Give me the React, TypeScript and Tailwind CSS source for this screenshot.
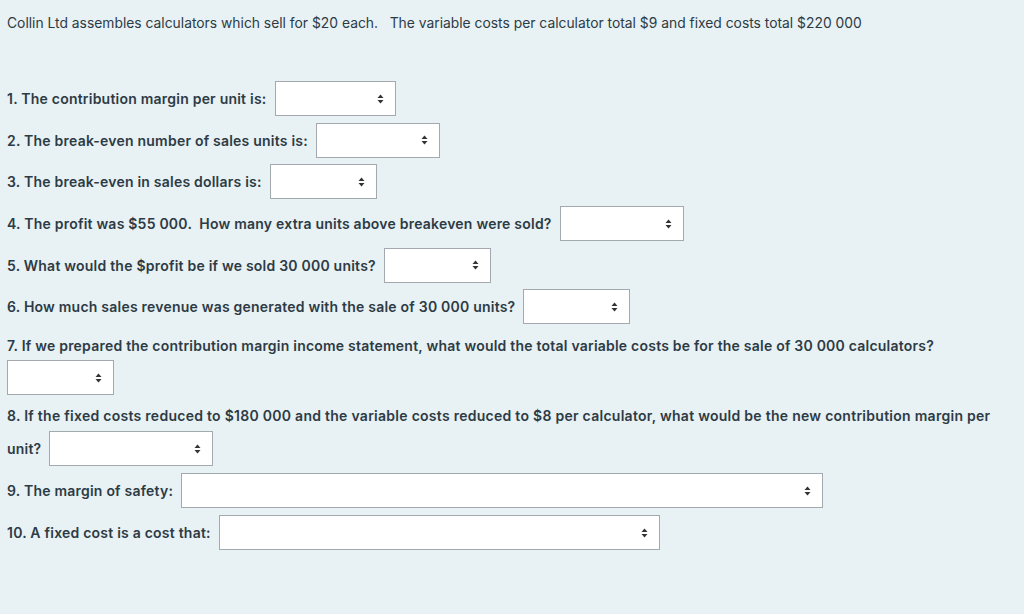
import React from "react";

function Sel({ w }: { w: number }) {
  return (
    <div
      className="relative h-[35px] shrink-0 border border-[#a3a9ae] bg-white"
      style={{ width: w }}
    >
      <svg
        className="absolute right-[11px] top-1/2 -translate-y-1/2"
        width="7"
        height="10"
        viewBox="0 0 7 10"
      >
        <path d="M3.5 0.5 L6.5 4 L0.5 4 Z" fill="#333" />
        <path d="M3.5 9.5 L6.5 6 L0.5 6 Z" fill="#333" />
      </svg>
    </div>
  );
}

function Row({ label, w }: { label: string; w: number }) {
  return (
    <div className="flex h-[35px] items-center gap-[8px]">
      <span className="whitespace-pre">{label}</span>
      <Sel w={w} />
    </div>
  );
}

export default function App() {
  return (
    <div className="min-h-[614px] bg-[#e8f1f4] px-[7px] pt-[14px] font-['Inter',sans-serif] text-[#2d3b45]">
      <p className="whitespace-pre text-[13.85px] leading-[18px]">
        {"Collin Ltd assembles calculators which sell for $20 each.   The variable costs per calculator total $9 and fixed costs total $220 000"}
      </p>
      <div className="text-[14px] font-semibold tracking-[0.22px]">
        <div className="mt-[49px] flex flex-col gap-[6.7px]">
          <Row label="1. The contribution margin per unit is:" w={121} />
          <Row label="2. The break-even number of sales units is:" w={124} />
          <Row label="3. The break-even in sales dollars is:" w={107} />
          <Row label="4. The profit was $55 000.  How many extra units above breakeven were sold?" w={124} />
          <Row label="5. What would the $profit be if we sold 30 000 units?" w={107} />
          <Row label="6. How much sales revenue was generated with the sale of 30 000 units?" w={107} />
        </div>
        <p className="mt-[12px] whitespace-nowrap leading-[20px]">
          7. If we prepared the contribution margin income statement, what would the total variable costs be for the sale of 30 000 calculators?
        </p>
        <div className="mt-[4px]">
          <Sel w={107} />
        </div>
        <p className="mt-[11px] whitespace-nowrap leading-[20px] tracking-[0.27px]">
          8. If the fixed costs reduced to $180 000 and the variable costs reduced to $8 per calculator, what would be the new contribution margin per
        </p>
        <div className="mt-[5px] flex flex-col gap-[7px]">
          <Row label="unit?" w={164} />
          <Row label="9. The margin of safety:" w={642} />
          <Row label="10. A fixed cost is a cost that:" w={441} />
        </div>
      </div>
    </div>
  );
}
